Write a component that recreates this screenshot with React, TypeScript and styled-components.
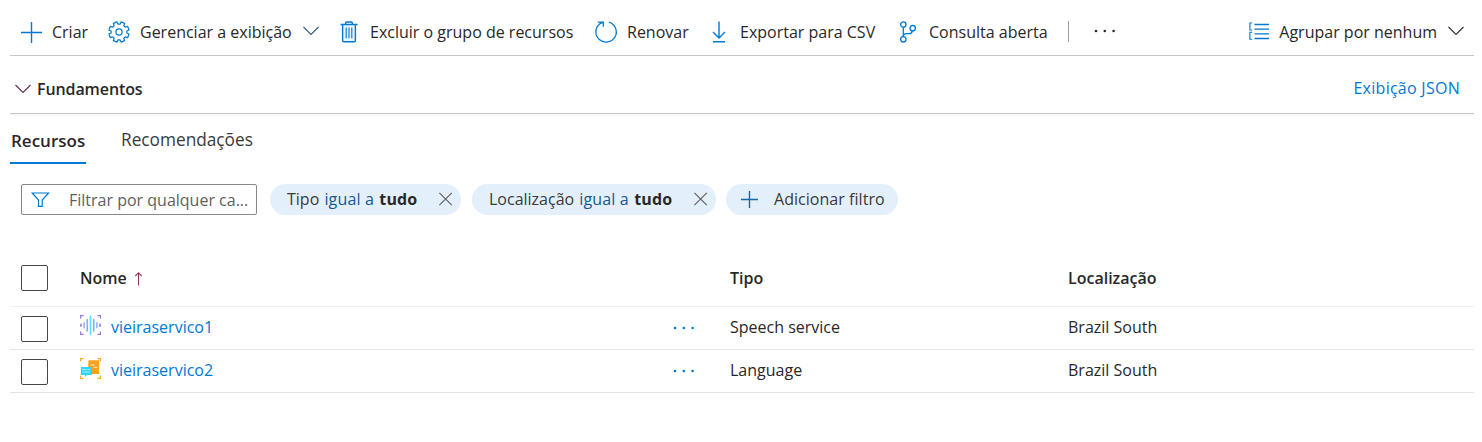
import React from "react";
import styled, { createGlobalStyle } from "styled-components";

const GlobalStyle = createGlobalStyle`
  * { box-sizing: border-box; }
  body {
    margin: 0;
    background: #fff;
    color: #292827;
    font: 16px/22px "Open Sans", "Segoe UI", sans-serif;
  }
`;

const Page = styled.main`
  width: 1464px;
  margin-left: 10px;
`;

const Toolbar = styled.div`
  display: flex;
  height: 56px;
  padding: 20px 10px 0 11px;
  border-bottom: 1px solid #c8c6c4;
`;

const Command = styled.div<{ $width?: number; $gap: number }>`
  display: flex;
  align-items: center;
  flex: none;
  gap: ${(p) => p.$gap}px;
  height: 24px;
  width: ${(p) => (p.$width ? `${p.$width}px` : "auto")};
  white-space: nowrap;
`;

const Divider = styled.div`
  width: 1px;
  height: 21px;
  margin: 1px 25px 0 0;
  background: #a19f9d;
`;

const Spacer = styled.div`
  flex: 1;
`;

const Icon = styled.svg<{ $color?: string }>`
  flex: none;
  display: block;
  overflow: visible;
  fill: none;
  stroke: ${(p) => p.$color ?? "#0078d4"};
  stroke-width: 1.4;
`;

const Essentials = styled.div`
  display: flex;
  justify-content: space-between;
  height: 58px;
  padding: 21px 14px 0 5px;
  border-bottom: 1px solid #c8c6c4;
  box-shadow: 0 2px 0 #f8f8f8;
`;

const EssentialsTitle = styled.div`
  display: flex;
  align-items: center;
  height: 24px;
  gap: 6px;
  font-weight: 600;
  letter-spacing: -0.1px;
`;

const Link = styled.span<{ $spacing?: number }>`
  color: #0078d4;
  letter-spacing: ${(p) => p.$spacing ?? 0}px;
`;

const Tabs = styled.div`
  display: flex;
  gap: 34px;
  height: 50px;
`;

const Tab = styled.div<{ $active?: boolean }>`
  height: 50px;
  padding: ${(p) => (p.$active ? "16px 0 0 1px" : "15px 0 0 1px")};
  font-size: ${(p) => (p.$active ? "17px" : "17.25px")};
  font-weight: ${(p) => (p.$active ? 600 : 400)};
  border-bottom: 2px solid ${(p) => (p.$active ? "#0078d4" : "transparent")};
  width: ${(p) => (p.$active ? "76px" : "auto")};
  color: ${(p) => (p.$active ? "#292827" : "#3b3a39")};
  white-space: nowrap;
`;

const Filters = styled.div`
  display: flex;
  padding: 20px 0 0 11px;
  height: 86px;
`;

const FilterBox = styled.div`
  display: flex;
  align-items: center;
  gap: 19px;
  width: 236px;
  height: 31px;
  padding: 0 0 0 9px;
  margin-right: 13px;
  border: 1px solid #8a8886;
  border-radius: 2px;
  color: #605e5c;
  white-space: nowrap;
`;

const Chip = styled.div<{ $width: number }>`
  display: flex;
  align-items: center;
  width: ${(p) => p.$width}px;
  height: 31px;
  padding: 0 8px 1px 17px;
  margin-right: 11px;
  border-radius: 16px;
  background: #e3f0fb;
  color: #3b3a39;
  white-space: pre;
`;

const AddChip = styled(Chip)`
  gap: 16px;
  padding-left: 15px;
  margin-left: -1px;
  letter-spacing: 0.04px;
`;

const Operator = styled.span`
  color: #14588f;
  margin-left: 1px;
  letter-spacing: 0.15px;
`;

const Value = styled.b`
  flex: 1;
  margin-left: 1px;
  font-weight: 700;
  letter-spacing: 0.15px;
  color: #292827;
`;

const Row = styled.div<{ $header?: boolean }>`
  display: grid;
  grid-template-columns: 59px 593px 57px 338px 1fr;
  height: ${(p) => (p.$header ? 57 : 43)}px;
  padding: ${(p) => (p.$header ? "15px" : "9px")} 0 0 11px;
  border-bottom: 1px solid ${(p) => (p.$header ? "#f1f0ef" : "#e5e4e3")};
  font-weight: ${(p) => (p.$header ? 600 : 400)};
`;

const Checkbox = styled.div`
  width: 27px;
  height: 26px;
  border: 1px solid #484644;
  border-radius: 2px;
`;

const Cell = styled.div<{ $top?: number; $gap?: number }>`
  display: flex;
  height: 22px;
  gap: ${(p) => p.$gap ?? 0}px;
  margin-top: ${(p) => p.$top ?? 0}px;
  white-space: nowrap;
`;

const Plus = () => (
  <Icon width="21" height="21" viewBox="0 0 21 21">
    <path d="M10.5 0v21M0 10.5h21" />
  </Icon>
);

const AddPlus = () => (
  <Icon width="17" height="17" viewBox="0 0 17 17" $color="#1668a6">
    <path d="M8.5 0v17M0 8.5h17" />
  </Icon>
);

const Chevron = ({ color = "#323130" }: { color?: string }) => (
  <Icon width="16" height="10" viewBox="0 0 16 10" $color={color}>
    <path strokeWidth="1.1" d="M.5 1 8 8.5 15.5 1" />
  </Icon>
);

const gearPath = (() => {
  const points: string[] = [];
  for (let i = 0; i < 8; i++) {
    const mid = (i + 0.5) * 45;
    for (const [offset, radius] of [[-15, 7.9], [-11, 10.3], [11, 10.3], [15, 7.9]]) {
      const a = ((mid + offset) * Math.PI) / 180;
      points.push(`${(11 + radius * Math.cos(a)).toFixed(2)} ${(11 + radius * Math.sin(a)).toFixed(2)}`);
    }
  }
  return `M${points.join("L")}Z`;
})();

const Gear = () => (
  <Icon width="22" height="22" viewBox="0 0 22 22">
    <path d={gearPath} strokeWidth="1.2" strokeLinejoin="round" />
    <circle cx="11" cy="11" r="3.1" strokeWidth="1.2" />
  </Icon>
);

const Trash = () => (
  <Icon width="18" height="22" viewBox="0 0 18 22">
    <path d="M2.6 4v15.5q0 1.3 1.3 1.3h10.2q1.3 0 1.3-1.3V4" fill="#e8f3fc" />
    <path d="M.5 3.5h17M5.7 3V2q0-1 1-1h4.6q1 0 1 1v1" />
    <path d="M6.2 6.5v10.8M9 6.5v10.8M11.8 6.5v10.8" strokeWidth="1.1" />
  </Icon>
);

const Refresh = () => (
  <Icon width="24" height="22" viewBox="0 0 24 22">
    <path d="M14.8 1.1A10.2 10.2 0 1 1 6.2 2.6L9.3 1.2M3.8 1.2h5.5v4.6" strokeWidth="1.25" />
  </Icon>
);

const Download = () => (
  <Icon width="16" height="22" viewBox="0 0 16 22">
    <path d="M8 .5v16M2 11l6 6 6-6M2 20.8h12" strokeWidth="1.4" />
  </Icon>
);

const Branch = () => (
  <Icon width="18" height="22" viewBox="0 0 18 22">
    <g strokeWidth="1.3">
      <circle cx="4.3" cy="3.5" r="2.7" />
      <circle cx="13.7" cy="7.2" r="2.7" />
      <circle cx="4.3" cy="18.3" r="2.7" />
      <path d="M4.3 6.2v9.4M13.3 9.9q-.4 2.8-3.2 2.8H7.3q-2.5 0-3 2" />
    </g>
  </Icon>
);

const GroupList = () => (
  <Icon width="20" height="20" viewBox="0 0 20 20">
    <path d="M5.5 2.5H20M5.5 7.2H20M5.5 11.8H20M5.5 16.5H20" strokeWidth="1.3" />
    <path d="M3.2 1H.9v7h2.3M3.2 10.3H.9v7h2.3" strokeWidth="1.1" />
  </Icon>
);

const Dots = ({ color }: { color: string }) => (
  <Icon width="22" height="4" viewBox="0 0 22 4">
    {[2, 10.8, 19.6].map((x) => (
      <circle key={x} cx={x} cy="2" r="1.3" fill={color} stroke="none" />
    ))}
  </Icon>
);

const Funnel = () => (
  <Icon width="19" height="16" viewBox="0 0 19 16">
    <path d="M1.2 1h16.4l-6.4 7.1v6.3H7.5V8.1Z" strokeWidth="1.2" />
  </Icon>
);

const Close = () => (
  <Icon width="14" height="14" viewBox="0 0 14 14" $color="#605e5c">
    <path d="M.4.8l12.4 12.4M12.8.8.4 13.2" strokeWidth="1.1" />
  </Icon>
);

const SortArrow = () => (
  <Icon width="9" height="14" viewBox="0 0 9 14" $color="#8b3a62">
    <path d="M3.5 13.5V1M.2 4.2 3.5.9l3.3 3.3" strokeWidth="1.1" />
  </Icon>
);

const SpeechIcon = () => (
  <Icon width="21" height="20" viewBox="0 0 21 20">
    <path
      d="M.6 3.6V.6h3M17.4.6h3v3M.6 16.4v3h3M17.4 19.4h3v-3"
      stroke="#9a7ade"
      strokeWidth="1.2"
    />
    <g strokeWidth="1.4" strokeLinecap="round">
      <path d="M1 9.3v2M20 9.3v2" stroke="#8661d1" />
      <path d="M4.1 7.8v5M16.9 7.8v5" stroke="#8ea6ee" />
      <path d="M7.2 4.5v11.5M13.8 4.5v11.5" stroke="#69adf2" />
      <path d="M10.5 1v18.3" stroke="#50e6ff" strokeWidth="1.7" />
    </g>
  </Icon>
);

const LanguageIcon = () => (
  <Icon width="21" height="21" viewBox="0 0 21 21" $color="none">
    <path
      d="M.6 3.6V.6h3M17.4.6h3v3M.6 17.4v3h3M17.4 20.4h3v-3"
      stroke="#faab34"
      strokeWidth="1.2"
    />
    <path d="M8.5 2.2h10.6V16h-8.3l-2.8-3Z" fill="#faa21d" />
    <path d="M10.5 6.8h4M13.5 9.3h4" stroke="#ffd590" strokeWidth="1.2" />
    <path d="M.9 9h10.9v8H6.9l-2 2v-2h-4Z" fill="#32d4f5" />
    <path d="M2.5 11.5h4M2.5 14h7.5M7.5 11.5H10" stroke="#a5effc" strokeWidth="1" />
  </Icon>
);

const resources = [
  { name: "vieiraservico1", type: "Speech service", location: "Brazil South", icon: <SpeechIcon /> },
  { name: "vieiraservico2", type: "Language", location: "Brazil South", icon: <LanguageIcon /> },
];

const NameIcon = styled.div`
  margin-top: -1px;
`;

const MoreCell = styled.div`
  padding-top: 10px;
`;

const SortIcon = styled.div`
  padding-top: 5px;
`;

const ChevronSlot = styled.div`
  margin: -2px 0 0 1px;
`;

const DotsSlot = styled.div`
  margin-top: -2px;
`;

export default function App() {
  return (
    <>
      <GlobalStyle />
      <Page>
        <Toolbar>
          <Command $width={87} $gap={10}><Plus /><span>Criar</span></Command>
          <Command $width={232} $gap={10}>
            <Gear /><span>Gerenciar a exibição</span>
            <ChevronSlot><Chevron color="#35597a" /></ChevronSlot>
          </Command>
          <Command $width={254} $gap={12}><Trash /><span>Excluir o grupo de recursos</span></Command>
          <Command $width={117} $gap={9}><Refresh /><span>Renovar</span></Command>
          <Command $width={188} $gap={13}><Download /><span>Exportar para CSV</span></Command>
          <Command $width={169} $gap={12}><Branch /><span>Consulta aberta</span></Command>
          <Divider />
          <Command $gap={0}><DotsSlot><Dots color="#292827" /></DotsSlot></Command>
          <Spacer />
          <Command $gap={10}>
            <GroupList /><span>Agrupar por nenhum</span>
            <ChevronSlot><Chevron /></ChevronSlot>
          </Command>
        </Toolbar>
        <Essentials>
          <EssentialsTitle><Chevron color="#5c2e4c" />Fundamentos</EssentialsTitle>
          <Link $spacing={0.27}>Exibição JSON</Link>
        </Essentials>
        <Tabs>
          <Tab $active>Recursos</Tab>
          <Tab>Recomendações</Tab>
        </Tabs>
        <Filters>
          <FilterBox><Funnel />Filtrar por qualquer ca...</FilterBox>
          <Chip $width={191}>Tipo <Operator>igual a </Operator><Value>tudo</Value><Close /></Chip>
          <Chip $width={244}>Localização <Operator>igual a </Operator><Value>tudo</Value><Close /></Chip>
          <AddChip $width={172}><AddPlus />Adicionar filtro</AddChip>
        </Filters>
        <Row $header>
          <Checkbox />
          <Cell $top={2} $gap={8}>Nome<SortIcon><SortArrow /></SortIcon></Cell>
          <span />
          <Cell $top={2}>Tipo</Cell>
          <Cell $top={2}>Localização</Cell>
        </Row>
        {resources.map((r) => (
          <Row key={r.name}>
            <Checkbox />
            <Cell $gap={10}><NameIcon>{r.icon}</NameIcon><Link>{r.name}</Link></Cell>
            <MoreCell><Dots color="#0078d4" /></MoreCell>
            <Cell>{r.type}</Cell>
            <Cell>{r.location}</Cell>
          </Row>
        ))}
      </Page>
    </>
  );
}
